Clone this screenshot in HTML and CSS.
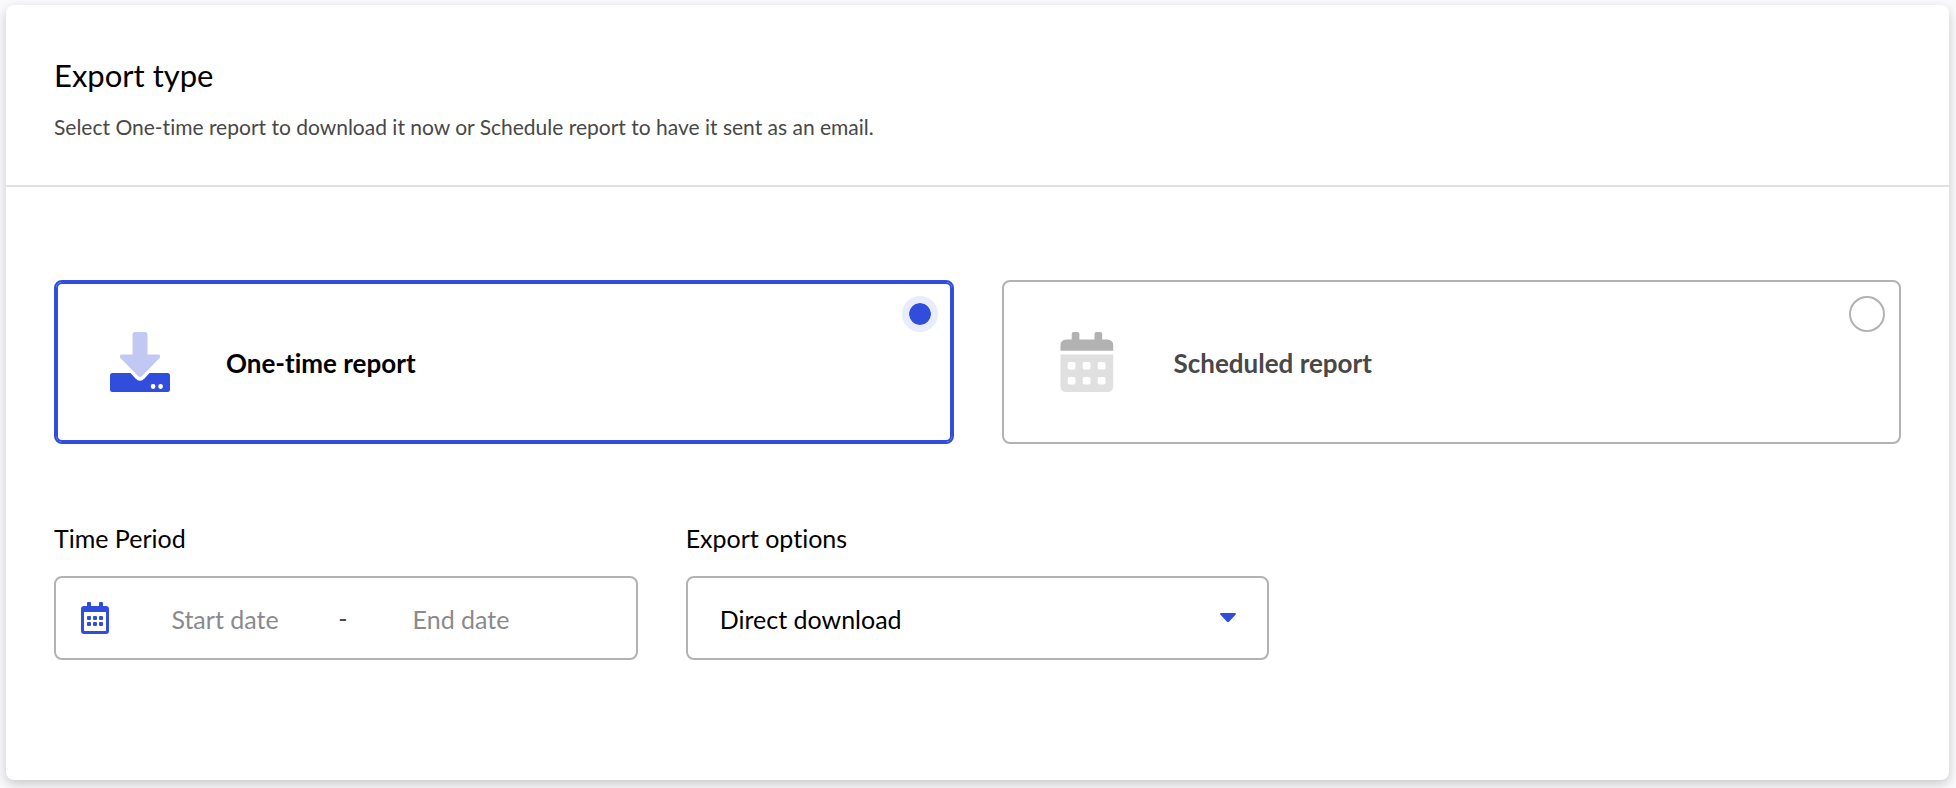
FILE: index.html
```html
<!DOCTYPE html>
<html lang="en">
<head>
<meta charset="utf-8">
<meta name="viewport" content="width=device-width, initial-scale=1">
<title>Export type</title>
<link rel="stylesheet" href="styles.css">
</head>
<body>
<form class="panel">
  <header class="panel-header">
    <h1 class="panel-title">Export type</h1>
    <p class="panel-text">Select One-time report to download it now or Schedule report to have it sent as an email.</p>
  </header>
  <div class="panel-body">
    <div class="types" role="radiogroup" aria-label="Export type">
      <label class="type">
        <svg class="type-icon" viewBox="0 0 60 60" aria-hidden="true">
          <path fill="#c1c8f4" d="M25 0h10a2.500 2.500 0 0 1 2.500 2.500V22.500H48a2 2 0 0 1 1.500 3.500L32 44a2.800 2.800 0 0 1-4 0L10.500 26a2 2 0 0 1 1.500-3.500H22.500V2.500A2.500 2.500 0 0 1 25 0z"/>
          <path fill="#304ddb" fill-rule="evenodd" d="M2.500 41H20.500l5 5.500q4.500 4.500 9 0l5-5.500H57.500A2.500 2.500 0 0 1 60 43.500V57.500A2.500 2.500 0 0 1 57.500 60H2.500A2.500 2.500 0 0 1 0 57.500V43.500A2.500 2.500 0 0 1 2.500 41zM40.700 54.500a2.400 2.400 0 1 0 4.800 0a2.400 2.400 0 1 0-4.800 0zM48.200 54.500a2.400 2.400 0 1 0 4.800 0a2.400 2.400 0 1 0-4.800 0z"/>
        </svg>
        <span class="type-name">One-time report</span>
        <input class="type-radio" type="radio" name="type" checked>
      </label>
      <label class="type">
        <svg class="type-icon" viewBox="1 0 60 60" aria-hidden="true">
          <path fill="#b2b2b2" d="M3.500 18.800V13a5.600 5.600 0 0 1 5.600-5.500h5.600V2a2 2 0 0 1 2-2h3.700a2 2 0 0 1 2 2v5.500h15.100V2a2 2 0 0 1 2-2h3.700a2 2 0 0 1 2 2v5.500h5.400A5.600 5.600 0 0 1 56.200 13v5.800z"/>
          <path fill="#e0e0e0" d="M3.500 22.500H56.200v32a5.500 5.500 0 0 1-5.600 5.500H9.100a5.500 5.500 0 0 1-5.600-5.500z"/>
          <g fill="#fff">
            <rect x="10.700" y="30" width="7.800" height="7.500" rx="1.800"/>
            <rect x="25.700" y="30" width="7.800" height="7.500" rx="1.800"/>
            <rect x="40.700" y="30" width="7.800" height="7.500" rx="1.800"/>
            <rect x="10.700" y="45" width="7.800" height="7.500" rx="1.800"/>
            <rect x="25.700" y="45" width="7.800" height="7.500" rx="1.800"/>
            <rect x="40.700" y="45" width="7.800" height="7.500" rx="1.800"/>
          </g>
        </svg>
        <span class="type-name">Scheduled report</span>
        <input class="type-radio" type="radio" name="type">
      </label>
    </div>
    <div class="fields">
      <div class="field">
        <label class="field-label" for="start">Time Period</label>
        <div class="control period">
          <svg class="period-icon" viewBox="0 0 28 32" aria-hidden="true">
            <path fill="#304ddb" fill-rule="evenodd" d="M7 0h2a1 1 0 0 1 1 1v3h8V1a1 1 0 0 1 1-1h2a1 1 0 0 1 1 1v3h3a3 3 0 0 1 3 3v22a3 3 0 0 1-3 3H3a3 3 0 0 1-3-3V7a3 3 0 0 1 3-3h3V1a1 1 0 0 1 1-1zM3 10v18.500q0 .5.500.5h21q.5 0 .5-.500V10z"/>
            <g fill="#304ddb">
              <rect x="6" y="14" width="4" height="4" rx="1"/>
              <rect x="12" y="14" width="4" height="4" rx="1"/>
              <rect x="18" y="14" width="4" height="4" rx="1"/>
              <rect x="6" y="20" width="4" height="4" rx="1"/>
              <rect x="12" y="20" width="4" height="4" rx="1"/>
              <rect x="18" y="20" width="4" height="4" rx="1"/>
            </g>
          </svg>
          <input class="period-input" id="start" type="text" placeholder="Start date">
          <span class="period-dash">-</span>
          <input class="period-input" type="text" placeholder="End date" aria-label="End date">
        </div>
      </div>
      <div class="field">
        <label class="field-label" for="options">Export options</label>
        <div class="select-wrap">
          <select class="control select" id="options">
            <option>Direct download</option>
          </select>
          <svg class="caret" viewBox="0 0 16 10" aria-hidden="true">
            <path fill="#304ddb" d="M1 0h14q1.500.5.500 1.800L9 8.800q-1 .9-2 0L.5 1.800Q-.5.500 1 0z"/>
          </svg>
        </div>
      </div>
    </div>
  </div>
</form>
</body>
</html>
```
FILE: styles.css
```css
* {
  box-sizing: border-box;
}

body {
  margin: 0;
  padding: 5px 7px 8px 6px;
  background: #fafafc;
  color: #000;
  font-family: Lato, "Liberation Sans", sans-serif;
  font-size: 25px;
  font-variant-ligatures: none;
  line-height: 36px;
}

.panel {
  background: #fff;
  border-radius: 8px;
  box-shadow: 0 4px 12px rgba(0, 0, 0, 0.2);
}

.panel-header {
  padding: 48px 48px 40px;
  border-bottom: 2px solid #e0e0e0;
}

.panel-title {
  margin: 0;
  font-size: 31px;
  font-weight: 400;
  line-height: 44px;
}

.panel-text {
  margin: 12px 0 0;
  color: #484848;
  font-size: 21px;
}

.panel-body {
  padding: 93px 48px 120px;
}

.types {
  display: grid;
  grid-template-columns: repeat(2, 1fr);
  gap: 48px;
}

.type {
  display: flex;
  align-items: center;
  gap: 56px;
  min-height: 164px;
  padding: 14px 14px 14px 54px;
  border: 2px solid #b2b2b2;
  border-radius: 8px;
  color: #484848;
  font-weight: 700;
}

.type:has(:checked) {
  border-color: #304ddb;
  box-shadow: inset 0 0 0 2px #304ddb;
  color: #000;
}

.type-icon {
  width: 60px;
  height: 60px;
}

.type-name {
  padding-top: 2px;
  font-size: 26px;
}

.type-radio {
  appearance: none;
  align-self: flex-start;
  width: 36px;
  height: 36px;
  margin: 0 0 0 auto;
  border: 2px solid #b2b2b2;
  border-radius: 50%;
}

.type-radio:checked {
  border: 7px solid #e8ecfb;
  background: #304ddb;
  background-clip: padding-box;
}

.fields {
  display: grid;
  grid-template-columns: repeat(3, 1fr);
  gap: 48px;
  margin-top: 76px;
}

.field-label {
  display: block;
  margin-bottom: 20px;
}

.control {
  width: 100%;
  height: 84px;
  border: 2px solid #b2b2b2;
  border-radius: 8px;
  background: #fff;
  color: #000;
  font: inherit;
}

.period {
  display: flex;
  align-items: center;
  padding: 0 25px;
}

.period-icon {
  flex: none;
  width: 28px;
  height: 32px;
  margin-right: 8px;
}

.period-input {
  flex: 0 1 216px;
  min-width: 0;
  padding: 2px 0 0;
  border: 0;
  background: none;
  color: #000;
  font: inherit;
  text-align: center;
}

.period-input::placeholder {
  color: #8a8a8e;
  opacity: 1;
}

.period-dash {
  width: 20px;
  color: #484848;
  text-align: center;
}

.select-wrap {
  display: grid;
  align-items: center;
}

.select-wrap > * {
  grid-area: 1 / 1;
}

.select {
  appearance: none;
  padding: 2px 64px 0 32px;
}

.caret {
  justify-self: end;
  width: 16px;
  height: 10px;
  margin-right: 33px;
  pointer-events: none;
}
```
